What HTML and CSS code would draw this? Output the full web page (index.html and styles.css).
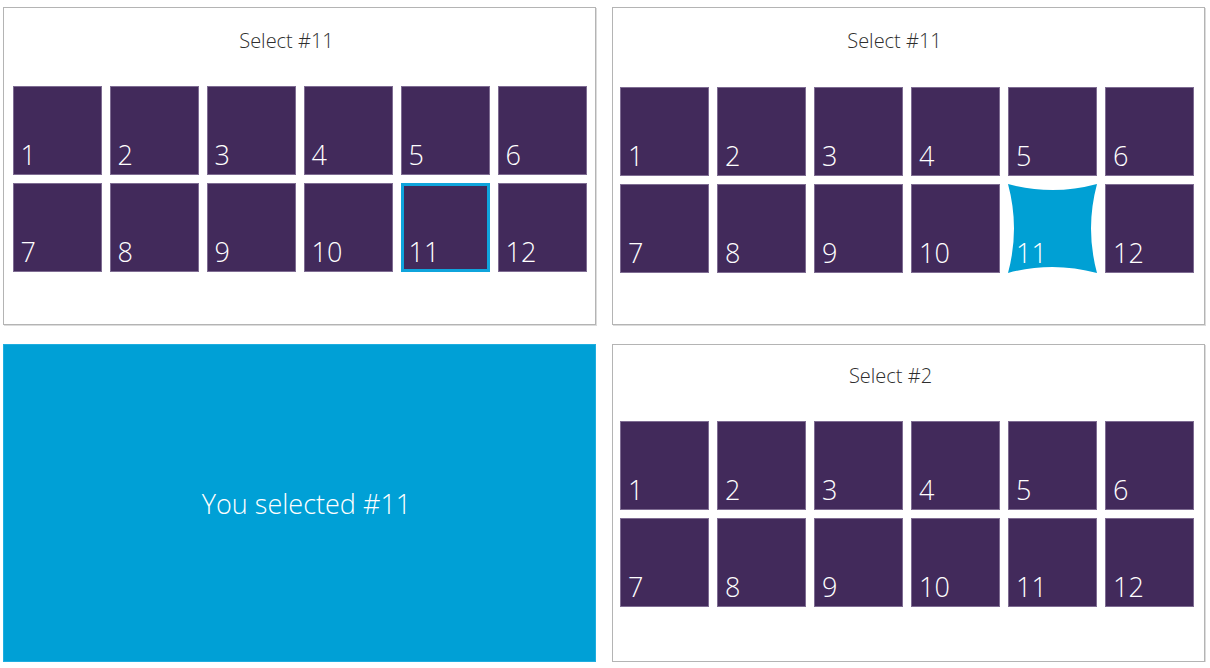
FILE: index.html
```html
<!DOCTYPE html>
<html lang="en">
<head>
<meta charset="utf-8">
<title>Tile selection</title>
<link rel="stylesheet" href="styles.css">
</head>
<body>
<div class="page">
  <section class="panel">
    <h2 class="title">Select #11</h2>
    <div class="grid">
      <div class="tile"><span>1</span></div>
      <div class="tile"><span>2</span></div>
      <div class="tile"><span>3</span></div>
      <div class="tile"><span>4</span></div>
      <div class="tile"><span>5</span></div>
      <div class="tile"><span>6</span></div>
      <div class="tile"><span>7</span></div>
      <div class="tile"><span>8</span></div>
      <div class="tile"><span>9</span></div>
      <div class="tile"><span>10</span></div>
      <div class="tile tile-focus"><span>11</span></div>
      <div class="tile"><span>12</span></div>
    </div>
  </section>
  <section class="panel panel-pressed">
    <h2 class="title">Select #11</h2>
    <div class="grid">
      <div class="tile"><span>1</span></div>
      <div class="tile"><span>2</span></div>
      <div class="tile"><span>3</span></div>
      <div class="tile"><span>4</span></div>
      <div class="tile"><span>5</span></div>
      <div class="tile"><span>6</span></div>
      <div class="tile"><span>7</span></div>
      <div class="tile"><span>8</span></div>
      <div class="tile"><span>9</span></div>
      <div class="tile"><span>10</span></div>
      <div class="tile tile-pressed">
        <svg class="pinch" viewBox="0 0 89 89" preserveAspectRatio="none"><path d="M0 0 Q44.5 12 89 0 Q77 44.5 89 89 Q44.5 77 0 89 Q12 44.5 0 0 Z"/></svg>
        <span>11</span>
      </div>
      <div class="tile"><span>12</span></div>
    </div>
  </section>
  <section class="panel panel-result">
    <p class="result">You selected #11</p>
  </section>
  <section class="panel panel-next">
    <h2 class="title">Select #2</h2>
    <div class="grid">
      <div class="tile"><span>1</span></div>
      <div class="tile"><span>2</span></div>
      <div class="tile"><span>3</span></div>
      <div class="tile"><span>4</span></div>
      <div class="tile"><span>5</span></div>
      <div class="tile"><span>6</span></div>
      <div class="tile"><span>7</span></div>
      <div class="tile"><span>8</span></div>
      <div class="tile"><span>9</span></div>
      <div class="tile"><span>10</span></div>
      <div class="tile"><span>11</span></div>
      <div class="tile"><span>12</span></div>
    </div>
  </section>
</div>
</body>
</html>
```
FILE: styles.css
```css
html, body {
  margin: 0;
  padding: 0;
  background: #ffffff;
}

body {
  font-family: "Open Sans", "Liberation Sans", sans-serif;
  font-weight: 300;
}

.page {
  display: grid;
  grid-template-columns: 593px 593px;
  grid-template-rows: 318px 318px;
  column-gap: 16px;
  row-gap: 19px;
  padding: 7px 0 0 3px;
}

.panel {
  box-sizing: border-box;
  border: 1px solid #b4b4b4;
  box-shadow: 1px 1px 0 #dcdcdc;
  background: #ffffff;
  display: flex;
  flex-direction: column;
  align-items: center;
  padding: 0 8px;
}

.title {
  margin: 21px 26px 0 0;
  height: 24px;
  line-height: 24px;
  font-size: 20px;
  font-weight: 300;
  color: #2e2e2e;
}

.grid {
  margin-top: 33px;
  display: grid;
  grid-template-columns: repeat(6, 89px);
  grid-auto-rows: 89px;
  gap: 8px;
}

.tile {
  position: relative;
  box-sizing: border-box;
  background: #422a5b;
  border: 1px solid #7e6c92;
  display: flex;
  align-items: flex-end;
  padding: 0 0 3px 7px;
}

.tile span {
  position: relative;
  color: #ffffff;
  font-size: 27px;
  line-height: 32px;
  font-weight: 300;
}

.tile-focus {
  border: 3px solid #0fa4dc;
  padding: 0 0 1px 5px;
}

.tile-pressed {
  background: transparent;
  border-color: transparent;
}

.pinch {
  position: absolute;
  left: -1px;
  top: -1px;
  width: 89px;
  height: 89px;
}

.pinch path {
  fill: #00a0d4;
}

.panel-pressed .title {
  margin-right: 28px;
}

.panel-pressed .grid,
.panel-next .grid {
  margin-right: 3px;
}

.panel-pressed .grid {
  margin-top: 34px;
}

.panel-result {
  background: #00a0d6;
  border-color: #1eaee0;
  box-shadow: none;
  justify-content: center;
}

.result {
  margin: 0 0 0 14px;
  color: #ffffff;
  font-size: 27px;
  font-weight: 300;
}

.panel-next .title {
  margin-top: 19px;
  margin-right: 36px;
}

.panel-next .grid {
  margin-top: 33px;
}
```
